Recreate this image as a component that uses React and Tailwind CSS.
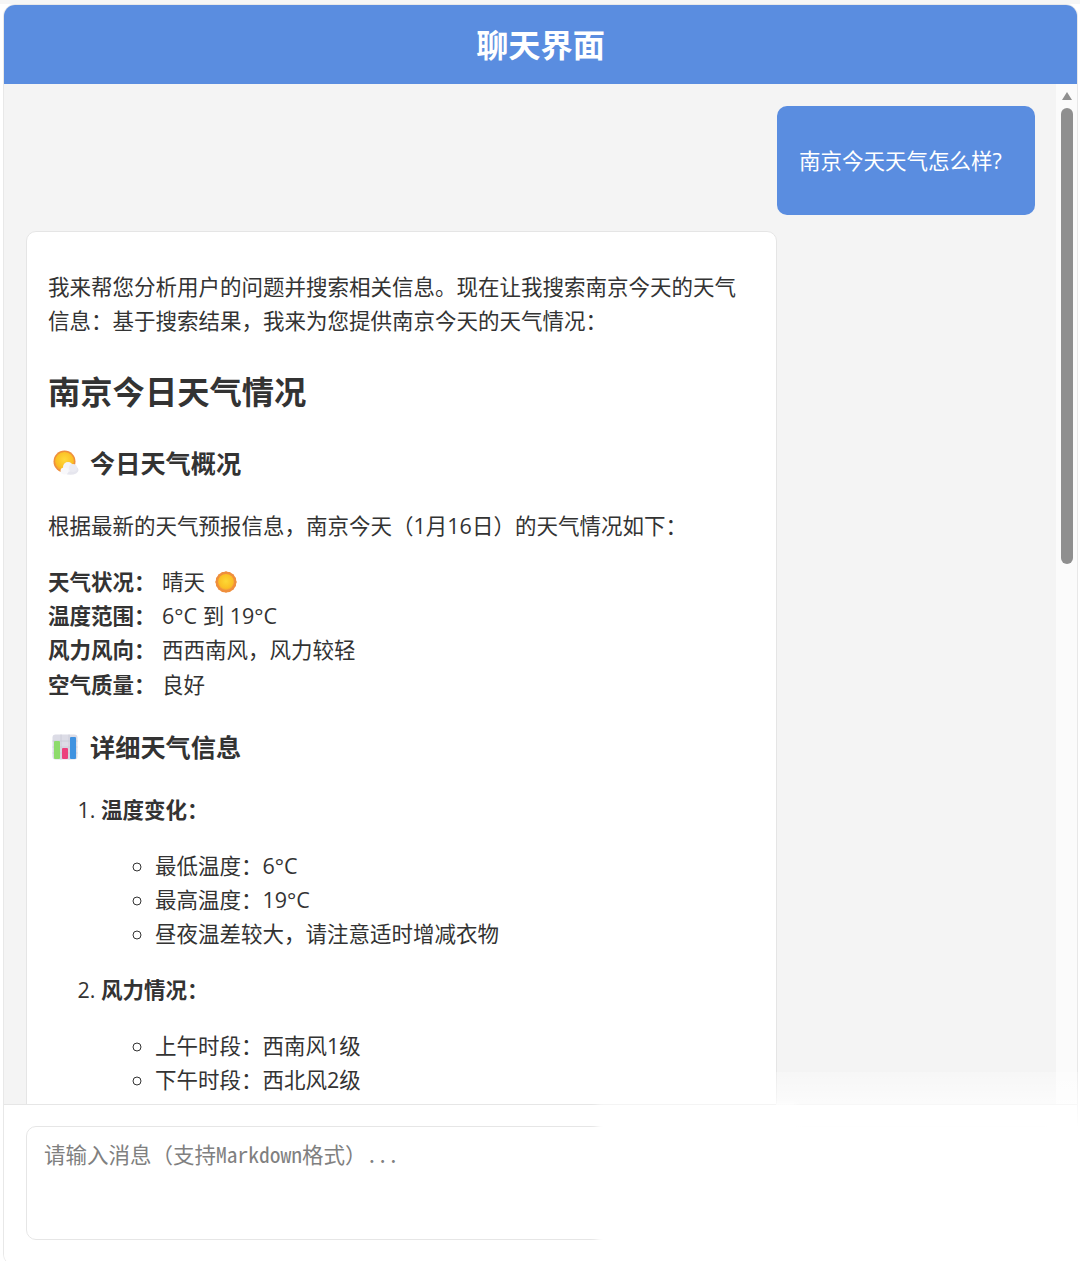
const bodyFont = '"Open Sans", "Noto Sans CJK SC", sans-serif';
const monoFont = '"Noto Sans Mono CJK SC", "Liberation Mono", "Noto Sans CJK SC", monospace';

function SunCloudIcon() {
  return (
    <svg width="28" height="28" viewBox="0 0 28 28" className="shrink-0">
      <defs>
        <radialGradient id="sunA" cx="50%" cy="40%" r="60%">
          <stop offset="0%" stopColor="#ffd93b" />
          <stop offset="75%" stopColor="#fbbf24" />
          <stop offset="100%" stopColor="#f59e3a" />
        </radialGradient>
      </defs>
      <circle cx="12.5" cy="12.5" r="11" fill="#ef8f3c" />
      <circle cx="12.5" cy="12.5" r="9.5" fill="url(#sunA)" />
      <ellipse cx="18.5" cy="21" rx="8" ry="4.8" fill="#e6e6ee" />
      <circle cx="16" cy="18" r="5" fill="#f4f4f8" />
      <circle cx="21" cy="19" r="4" fill="#ebebf2" />
      <ellipse cx="12.5" cy="22" rx="4" ry="3.4" fill="#f8f8fb" />
    </svg>
  );
}

function SunIcon() {
  return (
    <svg width="22" height="22" viewBox="0 0 22 22">
      <defs>
        <radialGradient id="sunB" cx="50%" cy="45%" r="55%">
          <stop offset="0%" stopColor="#fdd835" />
          <stop offset="80%" stopColor="#fbbf24" />
          <stop offset="100%" stopColor="#f59e3a" />
        </radialGradient>
      </defs>
      <circle cx="11" cy="11" r="10.5" fill="#ef8f3c" />
      <path
        d="M11 0l1.6 2 2.4-.9 1 2.3 2.5.1.2 2.5 2.3 1-.9 2.4 2 1.6-2 1.6.9 2.4-2.3 1-.2 2.5-2.5.1-1 2.3-2.4-.9-1.6 2-1.6-2-2.4.9-1-2.3-2.5-.1-.2-2.5-2.3-1 .9-2.4-2-1.6 2-1.6-.9-2.4 2.3-1 .2-2.5 2.5-.1 1-2.3 2.4.9z"
        fill="#ef8f3c"
      />
      <circle cx="11" cy="11" r="8" fill="url(#sunB)" />
    </svg>
  );
}

function ChartIcon() {
  return (
    <svg width="26" height="26" viewBox="0 0 26 26" className="shrink-0">
      <rect x="0.5" y="0.5" width="25" height="25" rx="3" fill="#dcdce6" />
      <path d="M0.5 7h25M0.5 13h25M0.5 19h25M9 0.5v25M17 0.5v25" stroke="#c9c9d6" strokeWidth="0.8" />
      <rect x="2" y="7" width="6" height="18" rx="1" fill="#8edb6c" />
      <rect x="10" y="14" width="6" height="11" rx="1" fill="#ec3f7c" />
      <rect x="18" y="3" width="6" height="22" rx="1" fill="#3f92e0" />
    </svg>
  );
}

function SectionTitle({ icon, children, className }) {
  return (
    <h2 className={`flex items-center text-[25.2px] leading-[34px] font-bold text-[#333] ${className}`}>
      <span className="flex w-[42px] pl-[4px]">{icon}</span>
      {children}
    </h2>
  );
}

const facts = [
  ["天气状况：", "晴天"],
  ["温度范围：", "6°C 到 19°C"],
  ["风力风向：", "西西南风，风力较轻"],
  ["空气质量：", "良好"],
];

export default function App() {
  return (
    <div className="relative h-[1261px] overflow-hidden bg-white" style={{ fontFamily: bodyFont }}>
      <div className="h-[4px] bg-[#f6f6f6]" />
      <div className="ml-[3px] flex h-[1262px] w-[1075px] flex-col overflow-hidden rounded-[12px] border border-[#e8e8e8] bg-white">
        <header className="flex h-[79px] shrink-0 items-center justify-center bg-[#5a8de0] pt-[2px] text-[32.2px] font-bold text-white">
          聊天界面
        </header>

        <div className="flex h-[1020px] shrink-0">
          <div className="flex-1 overflow-hidden bg-[#f4f4f4] pt-[22px] pl-[22px]">
            <div className="ml-[751px] flex h-[109px] w-[258px] items-center rounded-[10px] bg-[#5a8de0] pl-[22px] text-[21.5px] leading-[34px] text-white">
              南京今天天气怎么样?
            </div>

            <div className="mt-[16px] h-[1000px] w-[751px] rounded-[10px] border border-[#e5e5e5] bg-white px-[21px] pt-[38px] text-[21.5px] leading-[34.3px] text-[#333]">
              <p>
                我来帮您分析用户的问题并搜索相关信息。现在让我搜索南京今天的天气
                <br />
                信息：基于搜索结果，我来为您提供南京今天的天气情况：
              </p>

              <h1 className="mt-[31px] text-[32.3px] leading-[42px] font-bold">南京今日天气情况</h1>

              <SectionTitle icon={<SunCloudIcon />} className="mt-[34px]">
                今日天气概况
              </SectionTitle>

              <p className="mt-[29px]">根据最新的天气预报信息，南京今天（1月16日）的天气情况如下：</p>

              <div className="mt-[22px]">
                {facts.map(([label, value]) => (
                  <div key={label} className="flex items-center">
                    <strong className="w-[114px] font-bold">{label}</strong>
                    <span>{value}</span>
                    {label === "天气状况：" && (
                      <span className="ml-[10px] flex">
                        <SunIcon />
                      </span>
                    )}
                  </div>
                ))}
              </div>

              <SectionTitle icon={<ChartIcon />} className="mt-[28px]">
                详细天气信息
              </SectionTitle>

              <ol className="mt-[29px] list-decimal pl-[53px]">
                <li>
                  <strong className="font-bold">温度变化：</strong>
                  <ul className="mt-[22px] list-[circle] pl-[54px] leading-[34px]">
                    <li>最低温度：6°C</li>
                    <li>最高温度：19°C</li>
                    <li>昼夜温差较大，请注意适时增减衣物</li>
                  </ul>
                </li>
                <li className="mt-[22px]">
                  <strong className="font-bold">风力情况：</strong>
                  <ul className="mt-[21px] list-[circle] pl-[54px] leading-[34px]">
                    <li>上午时段：西南风1级</li>
                    <li>下午时段：西北风2级</li>
                  </ul>
                </li>
              </ol>
            </div>
          </div>

          <div className="w-[21px] shrink-0 bg-[#fbfbfb]">
            <svg width="10" height="8" viewBox="0 0 10 8" className="mx-auto mt-[8px]">
              <path d="M5 0L10 8H0z" fill="#8f8f8f" />
            </svg>
            <div className="mx-auto mt-[8px] h-[456px] w-[12px] rounded-full bg-[#8f8f8f]" />
          </div>
        </div>

        <div className="flex-1 border-t border-[#e6e6e6] bg-white px-[22px] pt-[21px]">
          <textarea
            readOnly
            placeholder="请输入消息（支持Markdown格式）..."
            className="h-[114px] w-full resize-none rounded-[10px] border border-[#e6e6e6] px-[17px] py-[10px] text-[21.5px] leading-[34px] outline-none placeholder:text-[#808080]"
            style={{ fontFamily: monoFont }}
          />
        </div>
      </div>

      {/* watermark wipe over the lower right corner */}
      <div className="absolute top-[1104px] right-[284px] bottom-[-8px] left-[597px] bg-white blur-[3px]" />
      <div className="absolute top-[1072px] right-0 bottom-0 left-[776px] bg-gradient-to-b from-white/25 to-white to-[56px]" />
      <div className="absolute right-0 bottom-0 left-[30px] h-[3px] bg-white" />
    </div>
  );
}
